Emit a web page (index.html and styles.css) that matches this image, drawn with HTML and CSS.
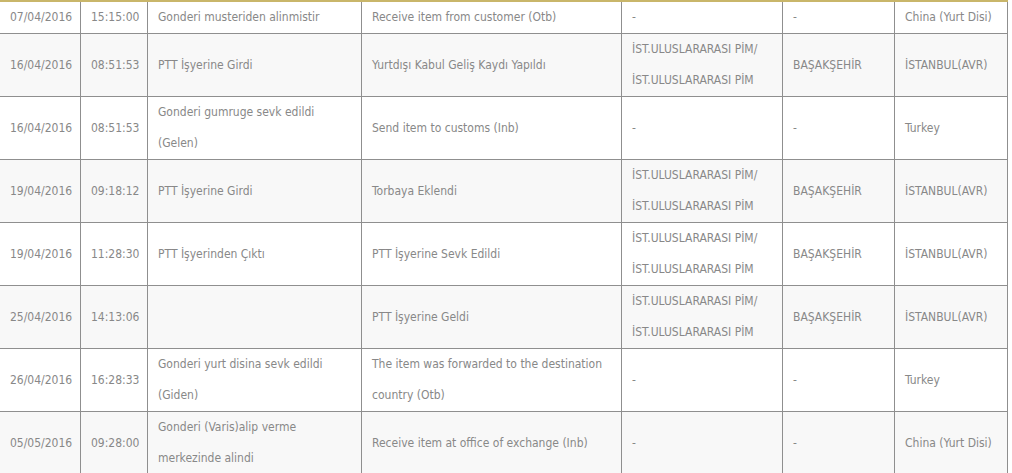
FILE: index.html
```html
<!DOCTYPE html>
<html lang="tr">
<head>
<meta charset="utf-8">
<title>Gönderi Hareketleri</title>
<link rel="stylesheet" href="styles.css">
</head>
<body>
<table class="track">
  <thead>
    <tr class="cut">
      <th class="c1"></th><th class="c2"></th><th class="c3"></th><th class="c4"></th><th class="c5"></th><th class="c6"></th><th class="c7"></th>
    </tr>
  </thead>
  <tbody>
    <tr>
      <td>07/04/2016</td><td>15:15:00</td><td>Gonderi musteriden alinmistir</td><td>Receive item from customer (Otb)</td><td>-</td><td>-</td><td>China (Yurt Disi)</td>
    </tr>
    <tr class="alt">
      <td>16/04/2016</td><td>08:51:53</td><td>PTT İşyerine Girdi</td><td>Yurtdışı Kabul Geliş Kaydı Yapıldı</td><td>İST.ULUSLARARASI PİM/<br>İST.ULUSLARARASI PİM</td><td>BAŞAKŞEHİR</td><td>İSTANBUL(AVR)</td>
    </tr>
    <tr>
      <td>16/04/2016</td><td>08:51:53</td><td>Gonderi gumruge sevk edildi<br>(Gelen)</td><td>Send item to customs (Inb)</td><td>-</td><td>-</td><td>Turkey</td>
    </tr>
    <tr class="alt">
      <td>19/04/2016</td><td>09:18:12</td><td>PTT İşyerine Girdi</td><td>Torbaya Eklendi</td><td>İST.ULUSLARARASI PİM/<br>İST.ULUSLARARASI PİM</td><td>BAŞAKŞEHİR</td><td>İSTANBUL(AVR)</td>
    </tr>
    <tr>
      <td>19/04/2016</td><td>11:28:30</td><td>PTT İşyerinden Çıktı</td><td>PTT İşyerine Sevk Edildi</td><td>İST.ULUSLARARASI PİM/<br>İST.ULUSLARARASI PİM</td><td>BAŞAKŞEHİR</td><td>İSTANBUL(AVR)</td>
    </tr>
    <tr class="alt">
      <td>25/04/2016</td><td>14:13:06</td><td></td><td>PTT İşyerine Geldi</td><td>İST.ULUSLARARASI PİM/<br>İST.ULUSLARARASI PİM</td><td>BAŞAKŞEHİR</td><td>İSTANBUL(AVR)</td>
    </tr>
    <tr>
      <td>26/04/2016</td><td>16:28:33</td><td>Gonderi yurt disina sevk edildi<br>(Giden)</td><td>The item was forwarded to the destination<br>country (Otb)</td><td>-</td><td>-</td><td>Turkey</td>
    </tr>
    <tr class="alt">
      <td>05/05/2016</td><td>09:28:00</td><td>Gonderi (Varis)alip verme<br>merkezinde alindi</td><td>Receive item at office of exchange (Inb)</td><td>-</td><td>-</td><td>China (Yurt Disi)</td>
    </tr>
  </tbody>
</table>
</body>
</html>
```

FILE: styles.css
```css
html, body {
  margin: 0;
  padding: 0;
  background: #ffffff;
}

.track {
  table-layout: fixed;
  width: 1008px;
  border-collapse: separate;
  border-spacing: 0;
  font-family: "DejaVu Sans Condensed", "DejaVu Sans", sans-serif;
  font-stretch: semi-condensed;
  font-size: 12px;
  color: #888888;
}

.track th,
.track td {
  box-sizing: border-box;
  padding: 0 10px;
  border-right: 1px solid #8f8f8f;
  border-bottom: 1px solid #8f8f8f;
  text-align: left;
  vertical-align: middle;
  line-height: 31px;
  white-space: nowrap;
}

.track .cut th {
  height: 2px;
  line-height: 0;
  padding: 0;
  border-right-color: #c9b66a;
  border-bottom: 2px solid #c9b66a;
}

.c1 { width: 81px; }
.c2 { width: 67px; }
.c3 { width: 214px; }
.c4 { width: 260px; }
.c5 { width: 161px; }
.c6 { width: 112px; }
.c7 { width: 113px; }

.track tr.alt td {
  background: #f8f8f8;
}
```
